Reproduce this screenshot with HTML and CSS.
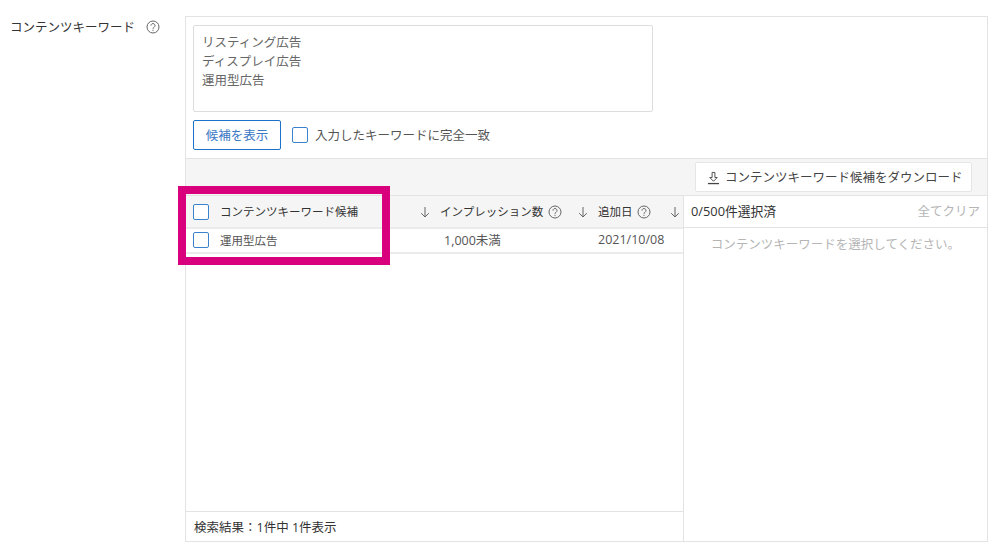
FILE: index.html
```html
<!DOCTYPE html>
<html lang="ja">
<head>
<meta charset="utf-8">
<title>コンテンツキーワード</title>
<link rel="stylesheet" href="styles.css">
</head>
<body>
<main class="field">
  <div class="field-label">
    <span>コンテンツキーワード</span>
    <svg class="help help-label" viewBox="0 0 14 14"><circle cx="7" cy="7" r="6"/><path d="M5 5.6a2 2 0 1 1 3.1 1.6c-.8.5-1.1.8-1.1 1.6"/><path d="M7 9.8v1.1"/></svg>
  </div>
  <div class="panel">
    <div class="entry">
      <div class="textarea">リスティング広告<br>ディスプレイ広告<br>運用型広告</div>
      <div class="entry-actions">
        <button class="btn-primary">候補を表示</button>
        <label class="check-label"><span class="checkbox"></span><span class="check-text">入力したキーワードに完全一致</span></label>
      </div>
    </div>
    <div class="toolbar">
      <button class="btn-download">
        <svg class="dl-icon" viewBox="0 0 14 14"><path d="M5.5 1h3v5.5h2.5L7 10.5 3 6.5h2.5z"/><path class="dl-base" d="M1 13h12"/></svg>
        コンテンツキーワード候補をダウンロード
      </button>
    </div>
    <div class="split">
      <section class="results">
        <div class="thead">
          <div class="col-name"><span class="checkbox"></span><span class="name-text">コンテンツキーワード候補</span></div>
          <svg class="arrow" viewBox="0 0 10 12"><path d="M5 1v10M1.2 7.2 5 11l3.8-3.8"/></svg>
          <div class="col-imp"><span>インプレッション数</span><svg class="help" viewBox="0 0 14 14"><circle cx="7" cy="7" r="6"/><path d="M5 5.6a2 2 0 1 1 3.1 1.6c-.8.5-1.1.8-1.1 1.6"/><path d="M7 9.8v1.1"/></svg></div>
          <svg class="arrow" viewBox="0 0 10 12"><path d="M5 1v10M1.2 7.2 5 11l3.8-3.8"/></svg>
          <div class="col-date"><span>追加日</span><svg class="help" viewBox="0 0 14 14"><circle cx="7" cy="7" r="6"/><path d="M5 5.6a2 2 0 1 1 3.1 1.6c-.8.5-1.1.8-1.1 1.6"/><path d="M7 9.8v1.1"/></svg></div>
          <svg class="arrow" viewBox="0 0 10 12"><path d="M5 1v10M1.2 7.2 5 11l3.8-3.8"/></svg>
        </div>
        <div class="row">
          <div class="col-name"><span class="checkbox"></span><span class="row-name">運用型広告</span></div>
          <div class="cell-imp">1,000未満</div>
          <div class="cell-date">2021/10/08</div>
        </div>
        <div class="spacer"></div>
        <div class="results-foot">検索結果：1件中 1件表示</div>
      </section>
      <aside class="selected">
        <div class="selected-head"><span class="selected-count">0/500件選択済</span><span class="clear">全てクリア</span></div>
        <div class="selected-empty">コンテンツキーワードを選択してください。</div>
      </aside>
    </div>
  </div>
</main>
<div class="highlight"></div>
</body>
</html>
```
FILE: styles.css
```css
* { box-sizing: border-box; }
html, body { margin: 0; height: 100%; }
body {
  background: #fff;
  color: #333;
  font-family: "Open Sans", "Noto Sans CJK JP", sans-serif;
  font-size: 12.5px;
  width: 1000px;
  height: 550px;
  overflow: hidden;
  position: relative;
}
.field { display: flex; padding: 16px 12px 0 10px; }
.field-label {
  width: 175px;
  flex: none;
  display: flex;
  align-items: center;
  align-self: flex-start;
  gap: 11px;
  height: 21px;
  font-size: 12.5px;
}
svg { fill: none; stroke: #666; stroke-width: 1; display: block; flex: none; }
.help { width: 14px; height: 14px; }
.panel {
  width: 803px;
  height: 526px;
  border: 1px solid #e3e3e3;
  display: flex;
  flex-direction: column;
}
.entry { padding: 8px 7px 7px; height: 141px; flex: none; }
.textarea {
  width: 460px;
  height: 87px;
  border: 1px solid #ddd;
  border-radius: 2px;
  padding: 7px 8px;
  line-height: 19px;
  color: #666;
}
.entry-actions { display: flex; align-items: center; margin-top: 8px; gap: 11px; }
.btn-primary {
  width: 88px;
  height: 30px;
  border: 1px solid #1a73c8;
  border-radius: 2px;
  background: #fff;
  color: #3b78c4;
  font: inherit;
  padding: 0 0 2px;
}
.check-label { display: flex; align-items: center; gap: 7px; color: #555; }
.check-text { padding-bottom: 2px; }
.checkbox {
  width: 16px;
  height: 16px;
  border: 1.5px solid #3b82cc;
  border-radius: 2px;
  background: #fff;
  flex: none;
  display: block;
}
.toolbar {
  height: 38px;
  flex: none;
  background: #f5f5f5;
  border-top: 1px solid #e3e3e3;
  border-bottom: 1px solid #e3e3e3;
  display: flex;
  justify-content: flex-end;
  align-items: center;
  padding-right: 15px;
}
.btn-download {
  width: 277px;
  height: 30px;
  border: 1px solid #e6e6e6;
  border-radius: 2px;
  background: #fff;
  color: #444;
  font: inherit;
  display: flex;
  align-items: center;
  gap: 5px;
  padding: 0 0 2px 11px;
}
.dl-icon { width: 13px; height: 14px; stroke: #444; margin-top: 4px; }
.dl-base { stroke-width: 1.4; }
.split { flex: 1; display: flex; min-height: 0; }
.results {
  width: 498px;
  flex: none;
  border-right: 1px solid #e3e3e3;
  display: flex;
  flex-direction: column;
}
.thead, .row { display: flex; align-items: center; flex: none; }
.thead {
  height: 33px;
  background: #f5f5f5;
  border-bottom: 2px solid #ebebeb;
  font-size: 11.5px;
}
.thead span:not(.checkbox) { padding-bottom: 2px; }
.row { height: 25px; border-bottom: 2px solid #ebebeb; color: #555; }
.cell-imp, .cell-date, .row-name { padding-bottom: 2px; }
.col-name { display: flex; align-items: center; padding-left: 7px; width: 234px; flex: none; gap: 11px; }
.name-text { color: #333; }
.row-name { font-size: 11.5px; }
.row .checkbox { margin-bottom: 2px; }
.arrow { width: 10px; height: 12px; }
.col-imp { display: flex; align-items: center; gap: 5px; margin-left: 10px; width: 138px; flex: none; }
.col-date { display: flex; align-items: center; gap: 4px; margin-left: 10px; width: 72px; flex: none; }
.cell-imp { margin-left: 24px; width: 154px; flex: none; }
.spacer { flex: 1; }
.results-foot {
  height: 30px;
  flex: none;
  border-top: 1px solid #e3e3e3;
  display: flex;
  align-items: center;
  padding-left: 8px;
}
.selected { flex: 1; display: flex; flex-direction: column; }
.selected-head {
  height: 32px;
  flex: none;
  border-bottom: 1px solid #e3e3e3;
  display: flex;
  justify-content: space-between;
  align-items: center;
  padding: 0 7px 2px;
  color: #333;
}
.selected-count { font-size: 12.8px; }
.clear { color: #b5b5b5; }
.selected-empty { text-align: center; color: #b5b5b5; padding-top: 6px; font-size: 12.5px; }
.highlight {
  position: absolute;
  left: 178px;
  top: 186px;
  width: 212px;
  height: 79px;
  border: 8px solid #d9007e;
}
```
